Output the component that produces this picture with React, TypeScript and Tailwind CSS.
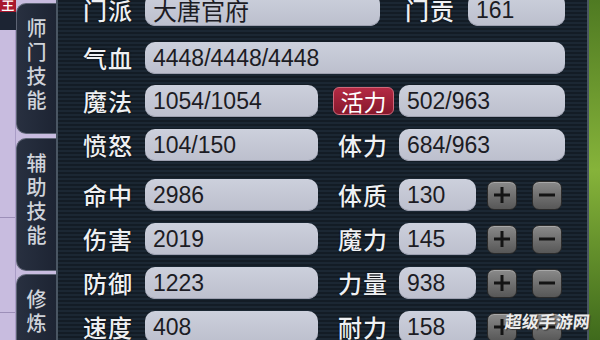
import type { ReactNode } from 'react';

const cjk = "font-['Noto_Sans_CJK_SC','Noto_Sans',sans-serif]";
const num = "font-['Liberation_Sans',Arial,sans-serif]";

function Label({ children, className = '' }: { children: ReactNode; className?: string }) {
  return (
    <div
      className={`${cjk} shrink-0 whitespace-nowrap text-[24px] leading-none font-medium text-[#eef0f3] tracking-[1px] [text-shadow:0_0_2px_#000] ${className}`}
    >
      {children}
    </div>
  );
}

function Field({ value, w, cn = false }: { value: string; w: string; cn?: boolean }) {
  return (
    <div
      className={`${w} h-[32px] shrink-0 rounded-[10px] bg-gradient-to-b from-[#ccd0dc] to-[#bcbfcd] shadow-[inset_0_-1px_0_#9da0b0] flex items-center pl-[8px] text-[#1c1c24] ${
        cn ? `${cjk} text-[24px]` : `${num} text-[23px]`
      } leading-none`}
    >
      {value}
    </div>
  );
}

function PmButton({ minus = false }: { minus?: boolean }) {
  return (
    <div className="w-[30px] h-[29px] shrink-0 rounded-[7px] border border-[#2a2a2a] bg-gradient-to-b from-[#8a8a8a] to-[#575757] shadow-[inset_0_1px_0_#a8a8a8] flex items-center justify-center">
      <svg width="18" height="18" viewBox="0 0 18 18">
        <rect x="1" y="7.5" width="16" height="3" fill="#141414" />
        {!minus && <rect x="7.5" y="1" width="3" height="16" fill="#141414" />}
      </svg>
    </div>
  );
}

function StatRow({ a, av, b, bv }: { a: string; av: string; b: string; bv: string }) {
  return (
    <div className="flex items-center h-[32px]">
      <Label className="w-[62px]">{a}</Label>
      <Field value={av} w="w-[173px]" />
      <Label className="w-[81px] pl-[20px]">{b}</Label>
      <Field value={bv} w="w-[77px]" />
      <div className="ml-[11px]">
        <PmButton />
      </div>
      <div className="ml-[15px]">
        <PmButton minus />
      </div>
    </div>
  );
}

function Tab({ chars, h, mt }: { chars: string[]; h: string; mt: string }) {
  return (
    <div
      className={`${h} ${mt} shrink-0 overflow-hidden rounded-l-[10px] border border-r-0 border-[#5d6474] bg-gradient-to-r from-[#283040] to-[#1d2433] flex flex-col items-center pt-[12px]`}
    >
      {chars.map(c => (
        <span
          key={c}
          className={`${cjk} block h-[24px] text-[20px] leading-[24px] font-medium text-[#cfd3da]`}
        >
          {c}
        </span>
      ))}
    </div>
  );
}

export default function App() {
  return (
    <div className="relative flex w-[600px] h-[340px] overflow-hidden bg-[#16202a]">
      {/* left strip of the window behind */}
      <div className="w-[16px] shrink-0 flex flex-col bg-[#c8bcdf]">
        <div className="h-[12px] bg-[#a8182e] text-white text-[12px] leading-[12px] overflow-hidden pl-[2px] font-bold">
          王
        </div>
        <div className="h-[18px] bg-[#1c2433]" />
        <div className="flex-1 border-r border-[#a99cc6] flex flex-col">
          <div className="h-[70px]" />
          <div className="h-[118px] border-b border-[#9c8fb8]" />
          <div className="h-[95px] border-b border-[#9c8fb8]" />
        </div>
      </div>

      {/* side tabs */}
      <div className="w-[40px] shrink-0 flex flex-col bg-[#c8bcdf]">
        <Tab chars={['师', '门', '技', '能']} h="h-[131px]" mt="mt-[3px]" />
        <Tab chars={['辅', '助', '技', '能']} h="h-[133px]" mt="mt-[4px]" />
        <Tab chars={['修', '炼']} h="h-[80px]" mt="mt-[3px]" />
      </div>

      {/* main panel */}
      <div className="w-[533px] shrink-0 border-l-2 border-r-2 border-[#4a5663] bg-[repeating-linear-gradient(180deg,#1b2733_0px,#1b2733_2px,#131c25_2px,#131c25_4px)] pl-[25px] flex flex-col -mt-[6px]">
        <div className="flex items-center h-[32px]">
          <Label className="w-[62px]">门派</Label>
          <Field value="大唐官府" w="w-[235px]" cn />
          <Label className="w-[88px] pl-[25px]">门贡</Label>
          <Field value="161" w="w-[97px]" />
        </div>

        <div className="flex items-center h-[32px] mt-[16px]">
          <Label className="w-[62px]">气血</Label>
          <Field value="4448/4448/4448" w="w-[420px]" />
        </div>

        <div className="flex items-center h-[32px] mt-[11px]">
          <Label className="w-[62px]">魔法</Label>
          <Field value="1054/1054" w="w-[173px]" />
          <div className="w-[81px] shrink-0 pl-[15px]">
            <div
              className={`${cjk} w-[61px] h-[28px] rounded-[6px] border border-[#d0687a] bg-gradient-to-b from-[#b42a44] to-[#86182c] text-white text-[23px] leading-none flex items-center justify-center`}
            >
              活力
            </div>
          </div>
          <Field value="502/963" w="w-[166px]" />
        </div>

        <div className="flex items-center h-[32px] mt-[12px]">
          <Label className="w-[62px]">愤怒</Label>
          <Field value="104/150" w="w-[173px]" />
          <Label className="w-[81px] pl-[20px]">体力</Label>
          <Field value="684/963" w="w-[166px]" />
        </div>

        <div className="mt-[18px] flex flex-col gap-[12px]">
          <StatRow a="命中" av="2986" b="体质" bv="130" />
          <StatRow a="伤害" av="2019" b="魔力" bv="145" />
          <StatRow a="防御" av="1223" b="力量" bv="938" />
          <StatRow a="速度" av="408" b="耐力" bv="158" />
        </div>
      </div>

      {/* scenery at right */}
      <div className="flex-1 bg-gradient-to-b from-[#4f7a22] via-[#86b33a] to-[#3f6a1c]" />

      {/* watermark */}
      <div
        className={`${cjk} absolute right-[10px] bottom-[9px] text-[17px] leading-[20px] font-bold text-[#ececec] -skew-x-6 [text-shadow:1px_1px_1px_#333]`}
      >
        超级手游网
      </div>
    </div>
  );
}
